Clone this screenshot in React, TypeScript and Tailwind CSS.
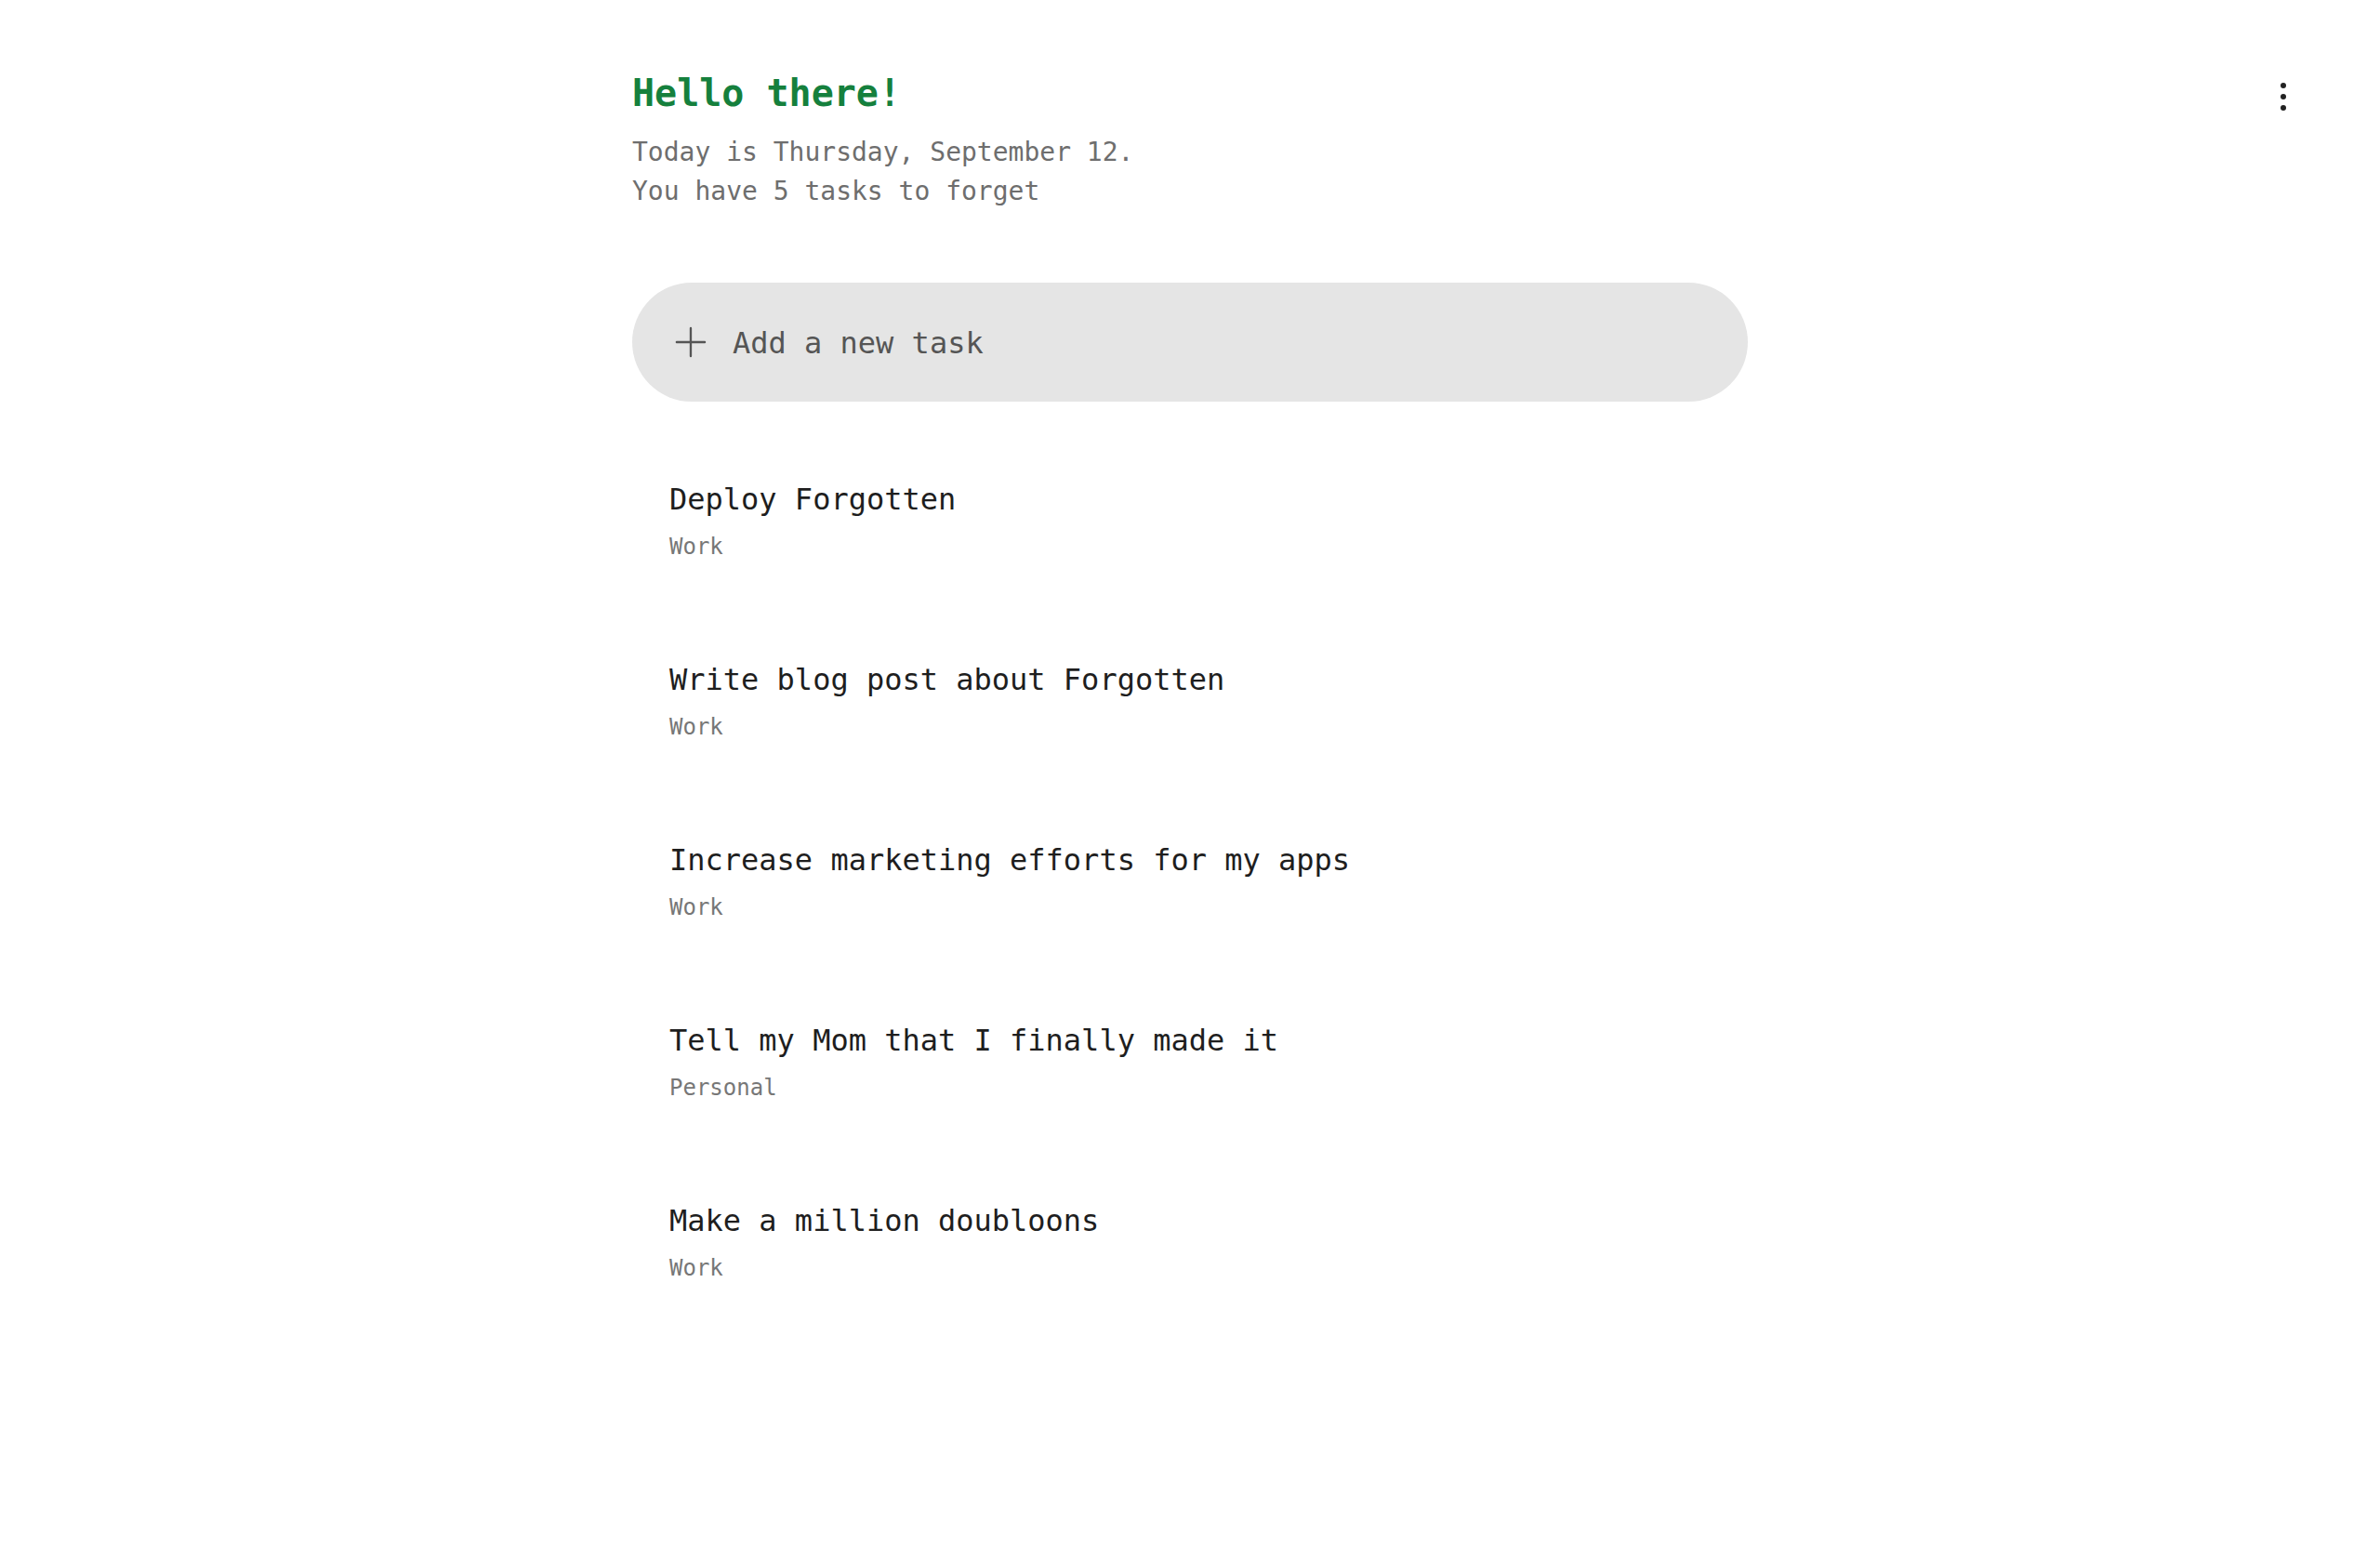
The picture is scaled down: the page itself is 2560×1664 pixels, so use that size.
import { useState } from "react";

const tasks = [
  { title: "Deploy Forgotten", tag: "Work" },
  { title: "Write blog post about Forgotten", tag: "Work" },
  { title: "Increase marketing efforts for my apps", tag: "Work" },
  { title: "Tell my Mom that I finally made it", tag: "Personal" },
  { title: "Make a million doubloons", tag: "Work" },
];

function PlusIcon() {
  return (
    <svg width="36" height="36" viewBox="0 0 36 36" fill="none" stroke="#555555" strokeWidth="2.5" strokeLinecap="round">
      <path d="M2 18h32M18 2v32" />
    </svg>
  );
}

export default function App() {
  const [draft, setDraft] = useState("");

  return (
    <div className="grid min-h-screen grid-cols-[1fr_1200px_1fr] bg-white font-['DejaVu_Sans_Mono','Liberation_Mono',monospace]">
      <div />
      <main className="pt-[70px]">
        <h1 className="text-[40px] font-bold leading-[60px] text-[#15803d]">Hello there!</h1>
        <div className="mt-[13px] text-[28px] leading-[42px] text-[#6e6e6e]">
          <p>Today is Thursday, September 12.</p>
          <p>You have {tasks.length} tasks to forget</p>
        </div>

        <label className="mt-[77px] flex h-[128px] items-center gap-[28px] rounded-full bg-[#e5e5e5] pl-[46px] pr-[64px]">
          <PlusIcon />
          <input
            value={draft}
            onChange={(e) => setDraft(e.target.value)}
            placeholder="Add a new task"
            className="mt-[2px] w-full bg-transparent text-[32px] text-[#333] outline-none placeholder:text-[#555]"
          />
        </label>

        <ul className="mt-[31px]">
          {tasks.map((task) => (
            <li key={task.title} className="flex flex-col gap-[9px] px-[40px] pt-[50px] pb-[51px]">
              <span className="text-[32px] leading-[48px] text-[#1e1e1e]">{task.title}</span>
              <span className="text-[24px] leading-[36px] text-[#777]">{task.tag}</span>
            </li>
          ))}
        </ul>
      </main>
      <div className="flex justify-end pt-[89px] pr-[101px]">
        <button type="button" aria-label="Menu" className="flex h-[30px] flex-col items-center gap-[6px]">
          <span className="h-[6px] w-[6px] rounded-full bg-[#222]" />
          <span className="h-[6px] w-[6px] rounded-full bg-[#222]" />
          <span className="h-[6px] w-[6px] rounded-full bg-[#222]" />
        </button>
      </div>
    </div>
  );
}
